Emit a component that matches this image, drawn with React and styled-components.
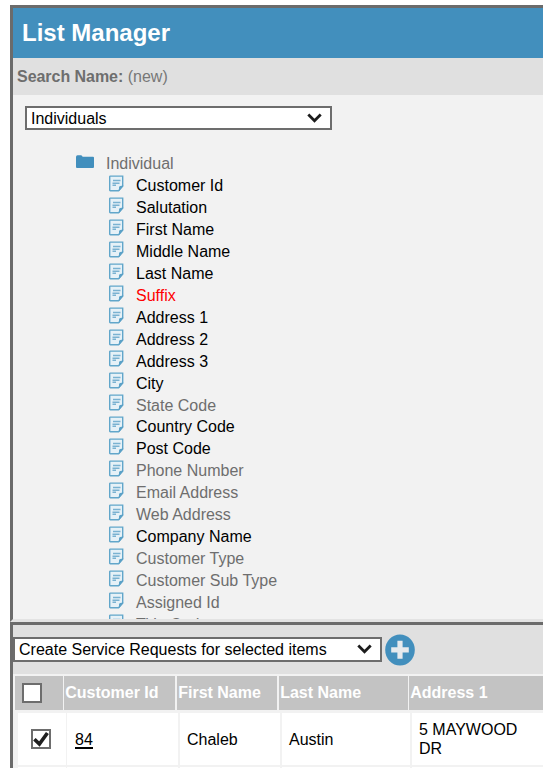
import React from "react";
import styled, { createGlobalStyle } from "styled-components";

const Global = createGlobalStyle`
  *, *::before, *::after { box-sizing: border-box; }
  body { margin: 0; background: #fff; overflow: hidden; }
`;

const Page = styled.main`
  height: 768px;
  padding: 5px 0 0 10px;
  overflow: hidden;
  display: flex;
  flex-direction: column;
  font: 16px/22px "Liberation Sans", Arial, sans-serif;
  color: #000;
`;

const SearchPanel = styled.section`
  flex: none;
  height: 617px;
  border: solid #6b6b6b;
  border-width: 3px 0 0 3px;
  border-bottom: 3px solid #e3e3e3;
  background: #f2f2f2;
  display: flex;
  flex-direction: column;
`;

const TitleBar = styled.header`
  flex: none;
  height: 50px;
  padding-left: 9px;
  background: #428fbd;
`;

const Title = styled.h1`
  margin: 0;
  font-size: 24px;
  line-height: 50px;
  font-weight: bold;
  color: #fff;
`;

const NameBar = styled.div`
  flex: none;
  height: 37px;
  padding-left: 4px;
  line-height: 37px;
  background: #e0e0e0;
  color: #777;
  white-space: pre;

  b { color: #6e6e6e; letter-spacing: -0.04px; }
`;

const SelectBox = styled.div`
  flex: none;
  width: ${(p) => p.$width}px;
  height: ${(p) => p.$height}px;
  padding: ${(p) => p.$drop || 0}px 8px 0 4px;
  border: 2px solid #6d6d6d;
  background: #fff;
  display: flex;
  align-items: center;
  justify-content: space-between;
  white-space: nowrap;
`;

const SourceRow = styled.div`
  flex: none;
  padding: 11px 0 0 12px;
`;

const Tree = styled.div`
  flex: 1;
  min-height: 0;
  overflow: hidden;
  padding: 23.14px 0 0 63px;
`;

const TreeRoot = styled.div`
  display: flex;
  height: 22px;
  color: #6e6e6e;

  svg { margin: 2px 12px 0 0; }
`;

const FieldList = styled.ul`
  margin: 0;
  padding: 0 0 0 33px;
  list-style: none;
`;

const Field = styled.li`
  display: flex;
  height: 21.94px;
  color: ${(p) => p.$color};

  svg { flex: none; margin: -0.2px 12px 0 0; }
`;

const ResultsPanel = styled.section`
  flex: 1;
  border: solid #6b6b6b;
  border-width: 3px 0 0 3px;
  background: #f2f2f2;
  overflow: hidden;
`;

const Toolbar = styled.div`
  height: 49px;
  background: #e0e0e0;
  display: flex;
  align-items: center;
`;

const AddButton = styled.button`
  width: 30px;
  height: 32px;
  margin-left: 3px;
  padding: 0;
  border: 0;
  background: none;
  display: flex;
`;

const HeadRow = styled.div`
  display: grid;
  grid-template-columns: 48px 112px 101px 129px 160px;
  column-gap: 1px;
  margin: 2px 0 3px 2px;
  height: 34px;
`;

const HeadCell = styled.div`
  background: #c3c3c3;
  margin-right: ${(p) => p.$inset || 0}px;
  padding: ${(p) => (p.$check ? "0 0 0 7px" : "0 0 1px 1.2px")};
  color: #fff;
  font-weight: bold;
  line-height: 33px;
  white-space: nowrap;
  display: flex;
  align-items: center;
`;

const DataRow = styled.div`
  display: grid;
  grid-template-columns: 48px 112px 101px 129px 160px;
  column-gap: 1px;
  margin: 0 0 2px 5px;
  height: 52px;
`;

const DataCell = styled.div`
  background: #fff;
  margin-right: ${(p) => p.$inset || 0}px;
  padding-left: ${(p) => (p.$check ? 13 : 7)}px;
  line-height: 19px;
  display: flex;
  align-items: center;
`;

const RecordLink = styled.a`
  margin: 3px 0 0 1px;
  color: #000;
  border-bottom: 2px solid #000;
  line-height: 14px;
`;

const Address = styled.span`
  width: 110px;
`;

const CheckBox = styled.span`
  flex: none;
  width: 20px;
  height: 20px;
  border: 2px solid #6d6d6d;
  background: #fff;
  display: flex;
`;

const Chevron = () => (
  <svg width="15" height="11" viewBox="0 0 15 11" fill="none">
    <path d="M1.3 1.5l6.2 6.2 6.2-6.2" stroke="#1c1c1c" strokeWidth="2.8" />
  </svg>
);

const FolderIcon = () => (
  <svg width="18" height="14" viewBox="0 0 18 14">
    <path d="M0 2q0-1.8 1.5-1.8h3.6q1 0 1.5 1.5h10.4q1 0 1 1V12q0 1-1 1H1q-1 0-1-1z" fill="#428fbd" />
  </svg>
);

const NoteIcon = () => (
  <svg width="15" height="17" viewBox="0 0 15 17" fill="none">
    <path d="M1.3 1.1h12.4v9.9l-4.2 4.7H1.3q-.6 0-.6-.6V1.7q0-.6.6-.6z" fill="#e6f1f7" stroke="#61a6ca" strokeWidth="1.4" />
    <path d="M14.3 10.6v.7l-4.3 5v-3.9q0-1.5 1.3-1.5z" fill="#5ba1c7" />
    <path d="M4 5.5h7.5M3.5 8.2h7M3.5 10.3h3.5" stroke="#7ab2d1" strokeWidth="1.5" />
  </svg>
);

const PlusIcon = () => (
  <svg width="30" height="32" viewBox="0 0 30 32">
    <ellipse cx="15" cy="16" rx="14.8" ry="15.4" fill="#428fbd" />
    <path d="M15 6.8v18M6.2 15.8h17.6" stroke="#e6eaed" strokeWidth="5.2" />
  </svg>
);

const Tick = () => (
  <svg width="16" height="16" viewBox="0 0 16 16" fill="none">
    <path d="M1.4 8.3l5 4.8L14.4 2" stroke="#1f1f1f" strokeWidth="3.6" />
  </svg>
);

const GREY = "#6e6e6e";
const fields = [
  ["Customer Id"],
  ["Salutation"],
  ["First Name"],
  ["Middle Name"],
  ["Last Name"],
  ["Suffix", "#f00"],
  ["Address 1"],
  ["Address 2"],
  ["Address 3"],
  ["City"],
  ["State Code", GREY],
  ["Country Code"],
  ["Post Code"],
  ["Phone Number", GREY],
  ["Email Address", GREY],
  ["Web Address", GREY],
  ["Company Name"],
  ["Customer Type", GREY],
  ["Customer Sub Type", GREY],
  ["Assigned Id", GREY],
  ["Title Code", GREY],
];

export default function App() {
  return (
    <Page>
      <Global />
      <SearchPanel>
        <TitleBar>
          <Title>List Manager</Title>
        </TitleBar>
        <NameBar>
          <b>Search Name:</b> (new)
        </NameBar>
        <SourceRow>
          <SelectBox $width={307} $height={24} $drop={1}>
            Individuals
            <Chevron />
          </SelectBox>
        </SourceRow>
        <Tree>
          <TreeRoot>
            <FolderIcon />
            Individual
          </TreeRoot>
          <FieldList>
            {fields.map(([name, color = "#000"]) => (
              <Field key={name} $color={color}>
                <NoteIcon />
                {name}
              </Field>
            ))}
          </FieldList>
        </Tree>
      </SearchPanel>
      <ResultsPanel>
        <Toolbar>
          <SelectBox $width={369} $height={25}>
            Create Service Requests for selected items
            <Chevron />
          </SelectBox>
          <AddButton aria-label="Add">
            <PlusIcon />
          </AddButton>
        </Toolbar>
        <HeadRow>
          <HeadCell $check>
            <CheckBox />
          </HeadCell>
          <HeadCell $inset={1}>Customer Id</HeadCell>
          <HeadCell $inset={1}>First Name</HeadCell>
          <HeadCell>Last Name</HeadCell>
          <HeadCell>Address 1</HeadCell>
        </HeadRow>
        <DataRow>
          <DataCell $check>
            <CheckBox>
              <Tick />
            </CheckBox>
          </DataCell>
          <DataCell $inset={1}>
            <RecordLink>84</RecordLink>
          </DataCell>
          <DataCell $inset={1}>Chaleb</DataCell>
          <DataCell $inset={1}>Austin</DataCell>
          <DataCell>
            <Address>5 MAYWOOD DR</Address>
          </DataCell>
        </DataRow>
        <DataRow>
          <DataCell />
          <DataCell $inset={1} />
          <DataCell $inset={1} />
          <DataCell $inset={1} />
          <DataCell />
        </DataRow>
      </ResultsPanel>
    </Page>
  );
}
